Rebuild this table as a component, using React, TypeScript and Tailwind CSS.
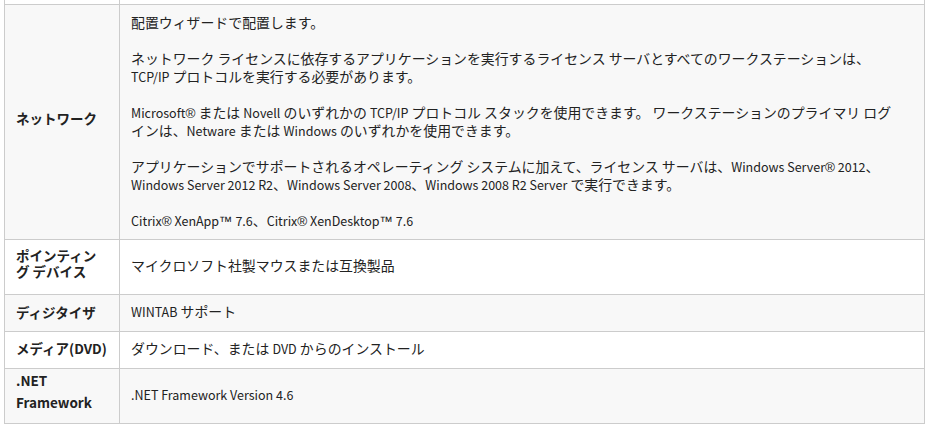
import React from "react";

const font = {
  fontFamily: '"Noto Sans CJK JP", "Noto Sans", sans-serif',
};

function L({ children }: { children: React.ReactNode }) {
  return <span className="text-[12.5px] leading-none">{children}</span>;
}

function R() {
  return (
    <span className="text-[13.5px] leading-none" style={{ fontFamily: '"Liberation Sans", Arial, sans-serif' }}>
      ®
    </span>
  );
}

function T() {
  return (
    <span className="text-[13.5px] leading-none" style={{ fontFamily: '"Liberation Sans", Arial, sans-serif' }}>
      ™
    </span>
  );
}

function Line({ children }: { children: React.ReactNode }) {
  return <div className="whitespace-nowrap h-[18px]">{children}</div>;
}

const labelBase =
  "flex border-r border-b border-[#cccccc] pl-[11px] pr-2 text-[13.5px] font-bold text-[#222222]";
const cellBase =
  "flex items-center border-b border-[#cccccc] pl-[11px] pr-2 pt-[7px] pb-[11px] text-[13.9px] leading-[18px] text-[#222222]";

export default function App() {
  return (
    <div className="w-[940px] h-[426px] bg-white overflow-hidden" style={font}>
      <div className="ml-[4px] w-[921px] border-l border-r border-[#cccccc] grid grid-cols-[115px_804px]">
        {/* previous row stub */}
        <div className="h-[5px] border-r border-b border-[#cccccc] bg-white" />
        <div className="h-[5px] border-b border-[#cccccc] bg-white" />

        {/* Network */}
        <div className={`${labelBase} bg-[#f8f8f8] items-center pt-[4px] pb-[13px] leading-[18px]`}>
          ネットワーク
        </div>
        <div className="bg-[#f8f8f8] border-b border-[#cccccc] pl-[11px] pr-2 pt-[8px] pb-[10px] text-[13.9px] leading-[18px] text-[#222222] flex flex-col gap-[18px]">
          <div>
            <Line>配置ウィザードで配置します。</Line>
          </div>
          <div>
            <Line>ネットワーク ライセンスに依存するアプリケーションを実行するライセンス サーバとすべてのワークステーションは、</Line>
            <Line>
              <L>TCP/IP</L> プロトコルを実行する必要があります。
            </Line>
          </div>
          <div>
            <Line>
              <L>
                Microsoft<R />
              </L>{" "}
              または <L>Novell</L> のいずれかの <L>TCP/IP</L> プロトコル スタックを使用できます。 ワークステーションのプライマリ ログ
            </Line>
            <Line>
              インは、<L>Netware</L> または <L>Windows</L> のいずれかを使用できます。
            </Line>
          </div>
          <div>
            <Line>
              アプリケーションでサポートされるオペレーティング システムに加えて、ライセンス サーバは、
              <L>
                Windows Server<R /> 2012
              </L>
              、
            </Line>
            <Line>
              <L>Windows Server 2012 R2</L>、<L>Windows Server 2008</L>、<L>Windows 2008 R2 Server</L> で実行できます。
            </Line>
          </div>
          <div>
            <Line>
              <L>
                Citrix<R /> XenApp<T /> 7.6
              </L>
              、
              <L>
                Citrix<R /> XenDesktop<T /> 7.6
              </L>
            </Line>
          </div>
        </div>

        {/* Pointing device */}
        <div className={`${labelBase} bg-white items-start pt-[7px] pb-[15px] leading-[16px]`}>
          <div>
            <div>ポインティン</div>
            <div>グ デバイス</div>
          </div>
        </div>
        <div className={`${cellBase} bg-white`}>マイクロソフト社製マウスまたは互換製品</div>

        {/* Digitizer */}
        <div className={`${labelBase} bg-[#f8f8f8] items-center pt-[8px] pb-[10px] leading-[18px]`}>
          ディジタイザ
        </div>
        <div className={`${cellBase} bg-[#f8f8f8]`}>
          <div className="h-[18px]">
            <L>WINTAB</L> サポート
          </div>
        </div>

        {/* Media */}
        <div className={`${labelBase} bg-white items-center pt-[7px] pb-[11px] leading-[18px]`}>
          メディア(DVD)
        </div>
        <div className={`${cellBase} bg-white`}>
          <div className="h-[18px]">
            ダウンロード、または <L>DVD</L> からのインストール
          </div>
        </div>

        {/* .NET */}
        <div className={`${labelBase} bg-[#f8f8f8] items-start pt-0 pb-[10px] leading-[22px]`}>
          <div>
            <div>.NET</div>
            <div>Framework</div>
          </div>
        </div>
        <div className={`${cellBase} bg-[#f8f8f8]`}>
          <div className="h-[18px]">
            <L>.NET Framework Version 4.6</L>
          </div>
        </div>
      </div>
    </div>
  );
}
